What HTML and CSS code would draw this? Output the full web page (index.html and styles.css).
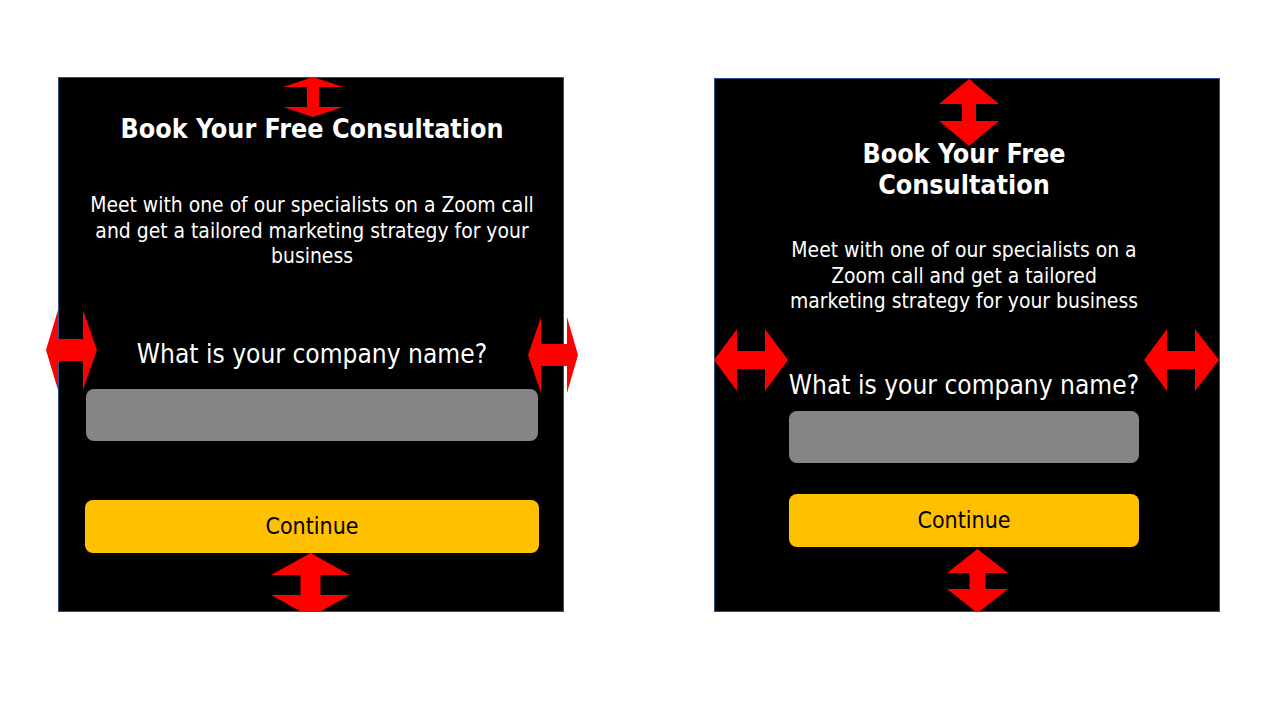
FILE: index.html
```html
<!DOCTYPE html>
<html lang="en">
<head>
    <meta charset="UTF-8">
    <meta name="viewport" content="width=device-width, initial-scale=1.0">
    <title>Book Your Free Consultation</title>
    <link rel="stylesheet" href="styles.css">
</head>
<body>
    <div class="slide">
        <!-- Wide layout -->
        <div class="panel panel-wide">
            <h1 class="panel-title">Book Your Free Consultation</h1>
            <p class="panel-text">Meet with one of our specialists on a Zoom call and get a tailored marketing strategy for your business</p>
            <label class="panel-question" for="companyWide">What is your company name?</label>
            <input class="panel-input" id="companyWide" type="text">
            <button class="panel-btn">Continue</button>

            <svg class="arrow arrow-top" width="60" height="40" viewBox="0 0 60 40">
                <polygon points="30,0 60,10 36,10 36,30 60,30 30,40 0,30 24,30 24,10 0,10"/>
            </svg>
            <svg class="arrow arrow-bottom" width="79" height="64" viewBox="0 0 79 64">
                <polygon points="39.5,0 79,22 49.5,22 49.5,42 79,42 39.5,64 0,42 29.5,42 29.5,22 0,22"/>
            </svg>
            <svg class="arrow arrow-left" width="51" height="80" viewBox="0 0 51 80">
                <polygon points="0,40 12,0 12,29 37,29 37,0 51,40 37,80 37,51 12,51 12,80"/>
            </svg>
            <svg class="arrow arrow-right" width="50" height="76" viewBox="0 0 50 76">
                <polygon points="0,38 13,0 13,27 39,27 39,0 50,38 39,76 39,49 13,49 13,76"/>
            </svg>
        </div>

        <!-- Narrow layout -->
        <div class="panel panel-narrow">
            <h1 class="panel-title">Book Your Free Consultation</h1>
            <p class="panel-text">Meet with one of our specialists on a Zoom call and get a tailored marketing strategy for your business</p>
            <label class="panel-question" for="companyNarrow">What is your company name?</label>
            <input class="panel-input" id="companyNarrow" type="text">
            <button class="panel-btn">Continue</button>

            <svg class="arrow arrow-top" width="60" height="67" viewBox="0 0 60 67">
                <polygon points="30,0 60,25 37,25 37,42 60,42 30,67 0,42 23,42 23,25 0,25"/>
            </svg>
            <svg class="arrow arrow-bottom" width="61" height="64" viewBox="0 0 61 64">
                <polygon points="30.5,0 61,24 38.5,24 38.5,40 61,40 30.5,64 0,40 22.5,40 22.5,24 0,24"/>
            </svg>
            <svg class="arrow arrow-left" width="74" height="62" viewBox="0 0 74 62">
                <polygon points="0,31 23,0 23,22 51,22 51,0 74,31 51,62 51,40 23,40 23,62"/>
            </svg>
            <svg class="arrow arrow-right" width="75" height="62" viewBox="0 0 75 62">
                <polygon points="0,31 23,0 23,22 51,22 51,0 75,31 51,62 51,40 23,40 23,62"/>
            </svg>
        </div>
    </div>
</body>
</html>
```

FILE: styles.css
```css
body {
    margin: 0;
    background-color: #fff;
    font-family: 'DejaVu Sans Condensed', 'DejaVu Sans', sans-serif;
}

.slide {
    display: flex;
    gap: 150px;
    padding: 77px 0 0 58px;
}

.panel {
    position: relative;
    box-sizing: border-box;
    width: 506px;
    height: 535px;
    background-color: #000;
    border: 1px solid #2f528f;
    display: flex;
    flex-direction: column;
    align-items: center;
    color: #fff;
    text-align: center;
}

.panel-title {
    margin: 0;
    font-size: 26.67px;
    font-weight: bold;
    line-height: 32px;
}

.panel-text {
    margin: 0;
    font-size: 20.9px;
    line-height: 25.6px;
}

.panel-question {
    display: block;
    font-size: 26.1px;
    line-height: 32px;
    white-space: nowrap;
}

.panel-input {
    box-sizing: border-box;
    height: 52px;
    border: none;
    border-radius: 8px;
    background-color: #858585;
    outline: none;
}

.panel-btn {
    box-sizing: border-box;
    height: 53px;
    border: none;
    border-radius: 8px;
    background-color: #ffc000;
    color: #000;
    font-family: inherit;
    font-size: 23px;
    cursor: pointer;
}

/* spacing for the wide variant */
.panel-wide {
    padding-left: 2px;
}

.panel-wide .panel-title {
    margin-top: 35px;
}

.panel-wide .panel-text {
    width: 460px;
    margin-top: 48px;
}

.panel-wide .panel-question {
    margin-top: 68px;
}

.panel-wide .panel-input {
    width: 452px;
    margin-top: 19px;
}

.panel-wide .panel-btn {
    width: 454px;
    margin-top: 59px;
}

/* spacing for the narrow variant */
.panel-narrow {
    margin-top: 1px;
    height: 534px;
    padding-right: 6px;
}

.panel-narrow .panel-title {
    width: 300px;
    margin-top: 59px;
    line-height: 31px;
}

.panel-narrow .panel-text {
    width: 356px;
    margin-top: 38px;
}

.panel-narrow .panel-question {
    margin-top: 54px;
}

.panel-narrow .panel-input {
    width: 350px;
    margin-top: 10px;
}

.panel-narrow .panel-btn {
    width: 350px;
    margin-top: 31px;
}

/* red resize arrows drawn over the panels */
.arrow {
    position: absolute;
    fill: #ff0000;
}

.panel-wide .arrow-top { left: 224px; top: -1px; }
.panel-wide .arrow-bottom { left: 212px; top: 475px; }
.panel-wide .arrow-left { left: -13px; top: 232px; }
.panel-wide .arrow-right { left: 469px; top: 239px; }

.panel-narrow .arrow-top { left: 224px; top: 0; }
.panel-narrow .arrow-bottom { left: 232px; top: 470px; }
.panel-narrow .arrow-left { left: -1px; top: 250px; }
.panel-narrow .arrow-right { left: 429px; top: 250px; }
```
